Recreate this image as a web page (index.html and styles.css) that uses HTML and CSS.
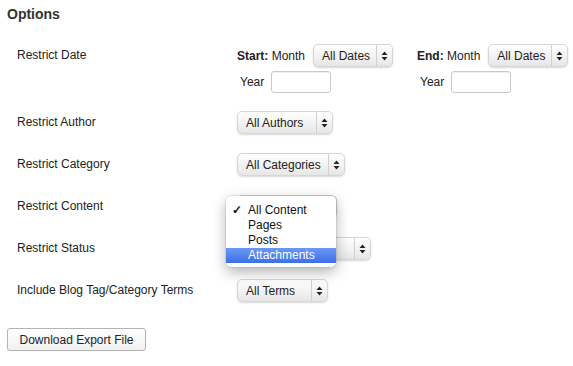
FILE: index.html
```html
<!DOCTYPE html>
<html lang="en">
<head>
    <meta charset="UTF-8">
    <meta name="viewport" content="width=device-width, initial-scale=1.0">
    <title>Export Options</title>
    <link rel="stylesheet" href="styles.css">
</head>
<body>
    <h3 class="title">Options</h3>

    <div class="options">
        <div class="row row-dates">
            <div class="label">Restrict Date</div>
            <div class="field dates">
                <div class="date-group">
                    <div class="line">
                        <span><b>Start:</b> Month</span>
                        <div class="select select-date">
                            <span class="value">All Dates</span>
                            <span class="arrows"><svg width="7" height="10" viewBox="0 0 7 10"><path d="M0.5 4 L3.5 0.5 L6.5 4 Z M0.5 6 L3.5 9.5 L6.5 6 Z" fill="#222"/></svg></span>
                        </div>
                    </div>
                    <div class="line year">
                        <span>Year</span>
                        <span class="input"></span>
                    </div>
                </div>
                <div class="date-group">
                    <div class="line">
                        <span><b>End:</b> Month</span>
                        <div class="select select-date">
                            <span class="value">All Dates</span>
                            <span class="arrows"><svg width="7" height="10" viewBox="0 0 7 10"><path d="M0.5 4 L3.5 0.5 L6.5 4 Z M0.5 6 L3.5 9.5 L6.5 6 Z" fill="#222"/></svg></span>
                        </div>
                    </div>
                    <div class="line year">
                        <span>Year</span>
                        <span class="input"></span>
                    </div>
                </div>
            </div>
        </div>

        <div class="row">
            <div class="label">Restrict Author</div>
            <div class="field">
                <div class="select select-author">
                    <span class="value">All Authors</span>
                    <span class="arrows"><svg width="7" height="10" viewBox="0 0 7 10"><path d="M0.5 4 L3.5 0.5 L6.5 4 Z M0.5 6 L3.5 9.5 L6.5 6 Z" fill="#222"/></svg></span>
                </div>
            </div>
        </div>

        <div class="row">
            <div class="label">Restrict Category</div>
            <div class="field">
                <div class="select select-category">
                    <span class="value">All Categories</span>
                    <span class="arrows"><svg width="7" height="10" viewBox="0 0 7 10"><path d="M0.5 4 L3.5 0.5 L6.5 4 Z M0.5 6 L3.5 9.5 L6.5 6 Z" fill="#222"/></svg></span>
                </div>
            </div>
        </div>

        <div class="row">
            <div class="label">Restrict Content</div>
            <div class="field">
                <!-- popup is open, its value is covered by the menu -->
                <div class="select select-content">
                    <span class="value"></span>
                    <span class="arrows"><svg width="7" height="10" viewBox="0 0 7 10"><path d="M0.5 4 L3.5 0.5 L6.5 4 Z M0.5 6 L3.5 9.5 L6.5 6 Z" fill="#222"/></svg></span>
                    <ul class="menu">
                        <li><span class="check">&#10003;</span>All Content</li>
                        <li>Pages</li>
                        <li>Posts</li>
                        <li class="active">Attachments</li>
                    </ul>
                </div>
            </div>
        </div>

        <div class="row">
            <div class="label">Restrict Status</div>
            <div class="field">
                <div class="select select-status">
                    <span class="value"></span>
                    <span class="arrows"><svg width="7" height="10" viewBox="0 0 7 10"><path d="M0.5 4 L3.5 0.5 L6.5 4 Z M0.5 6 L3.5 9.5 L6.5 6 Z" fill="#222"/></svg></span>
                </div>
            </div>
        </div>

        <div class="row">
            <div class="label">Include Blog Tag/Category Terms</div>
            <div class="field">
                <div class="select select-terms">
                    <span class="value">All Terms</span>
                    <span class="arrows"><svg width="7" height="10" viewBox="0 0 7 10"><path d="M0.5 4 L3.5 0.5 L6.5 4 Z M0.5 6 L3.5 9.5 L6.5 6 Z" fill="#222"/></svg></span>
                </div>
            </div>
        </div>
    </div>

    <button class="button">Download Export File</button>
</body>
</html>
```

FILE: styles.css
```css
body {
    margin: 0;
    padding: 0 7px;
    font-family: "Liberation Sans", Arial, sans-serif;
    font-size: 12px;
    color: #222;
    background: #fff;
}

.title {
    margin: 6px 0 12px;
    font-size: 14px;
    line-height: 17px;
    font-weight: bold;
    color: #333;
}

.row {
    display: grid;
    grid-template-columns: 220px 1fr;
    padding: 9px 0 10px 10px;
}

.row-dates {
    padding-bottom: 9px;
}

.label {
    line-height: 23px;
}

.dates {
    display: flex;
}

.date-group {
    width: 180px;
}

.line {
    display: flex;
    align-items: center;
    gap: 8px;
    height: 23px;
}

.line.year {
    height: 22px;
    margin-top: 4px;
    padding-left: 3px;
    gap: 7px;
}

.input {
    width: 58px;
    height: 20px;
    border: 1px solid #c9c9c9;
    border-radius: 3px;
    background: #fff;
    box-shadow: inset 0 1px 1px rgba(0, 0, 0, 0.06);
}

/* mac style popup button */
.select {
    position: relative;
    display: flex;
    align-items: center;
    box-sizing: border-box;
    height: 23px;
    border: 1px solid #d6d6d6;
    border-radius: 5px;
    background: linear-gradient(#ffffff, #f3f3f3 50%, #e6e6e6);
    box-shadow: 0 1px 2px rgba(0, 0, 0, 0.15);
}

.select .value {
    flex: 1;
    padding-left: 8px;
    white-space: nowrap;
    overflow: hidden;
}

.select .arrows {
    display: flex;
    align-items: center;
    justify-content: center;
    width: 15px;
    height: 100%;
    border-left: 1px solid #d0d0d0;
}

.select-date { width: 80px; }
.select-author { width: 96px; }
.select-category { width: 108px; }
.select-content { width: 100px; }
.select-status { width: 134px; }
.select-terms { width: 91px; }

.menu {
    position: absolute;
    top: 0;
    left: -12px;
    z-index: 2;
    width: 110px;
    margin: 0;
    padding: 7px 0 4px;
    list-style: none;
    background: #fff;
    border-radius: 5px;
    box-shadow: 0 5px 14px rgba(0, 0, 0, 0.3), 0 0 0 1px rgba(0, 0, 0, 0.07);
}

.menu li {
    position: relative;
    padding-left: 22px;
    line-height: 15px;
    color: #111;
}

.menu .check {
    position: absolute;
    left: 6px;
    font-weight: bold;
}

.menu .active {
    color: #fff;
    background: linear-gradient(#6b98f6, #3c6fe9);
}

.button {
    margin-top: 16px;
    height: 23px;
    width: 139px;
    padding: 0;
    font-family: inherit;
    font-size: 12px;
    color: #222;
    border: 1px solid #b3b3b3;
    border-radius: 3px;
    background: linear-gradient(#ffffff, #f1f1f1);
    box-shadow: 0 1px 1px rgba(0, 0, 0, 0.08);
}
```
